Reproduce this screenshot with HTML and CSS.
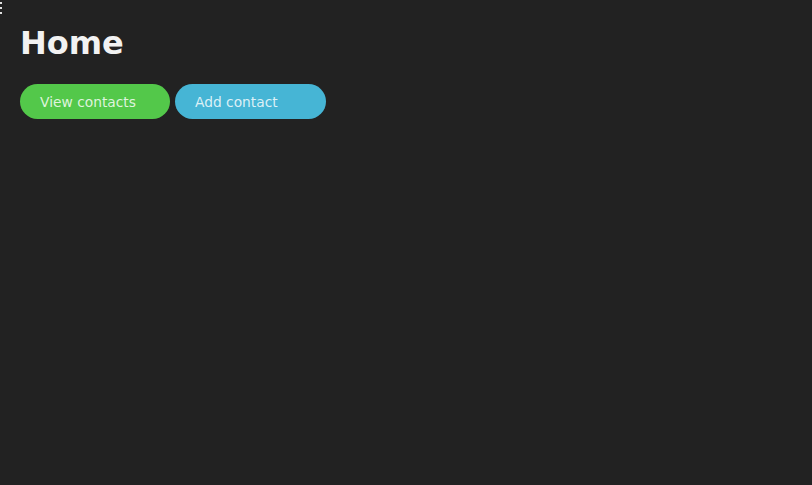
FILE: index.html
```html
<!DOCTYPE html>
<html>
<head>
<meta charset="utf-8">
<link rel="stylesheet" href="styles.css">
</head>
<body>
<div class="menu-icon"><span></span><span></span><span></span></div>
<main class="page">
  <h1 class="title">Home</h1>
  <div class="actions">
    <button class="btn btn-green">View contacts</button>
    <button class="btn btn-blue">Add contact</button>
  </div>
</main>
</body>
</html>
```
FILE: styles.css
```css
html, body {
  margin: 0;
  padding: 0;
  background: #222222;
  height: 100%;
}
body {
  font-family: "DejaVu Sans", sans-serif;
  color: #f2f2f2;
}
.menu-icon {
  position: absolute;
  left: 0;
  top: 2px;
  width: 2px;
  display: flex;
  flex-direction: column;
  gap: 3px;
}
.menu-icon span {
  display: block;
  width: 2px;
  height: 2px;
  background: #e0e0e0;
}
.page {
  padding: 25px 20px 0 20px;
}
.title {
  margin: 0;
  font-size: 32px;
  font-weight: bold;
  line-height: 37px;
  color: #f2f2f2;
}
.actions {
  display: flex;
  gap: 5px;
  margin-top: 22px;
}
.btn {
  width: 150px;
  height: 35px;
  border: none;
  border-radius: 18px;
  padding: 0 0 0 20px;
  text-align: left;
  font-family: "DejaVu Sans", sans-serif;
  font-size: 13.8px;
  color: rgba(255, 255, 255, 0.82);
}
.btn-green {
  background: #53c84a;
}
.btn-blue {
  width: 151px;
  background: #46b5d5;
}
```
